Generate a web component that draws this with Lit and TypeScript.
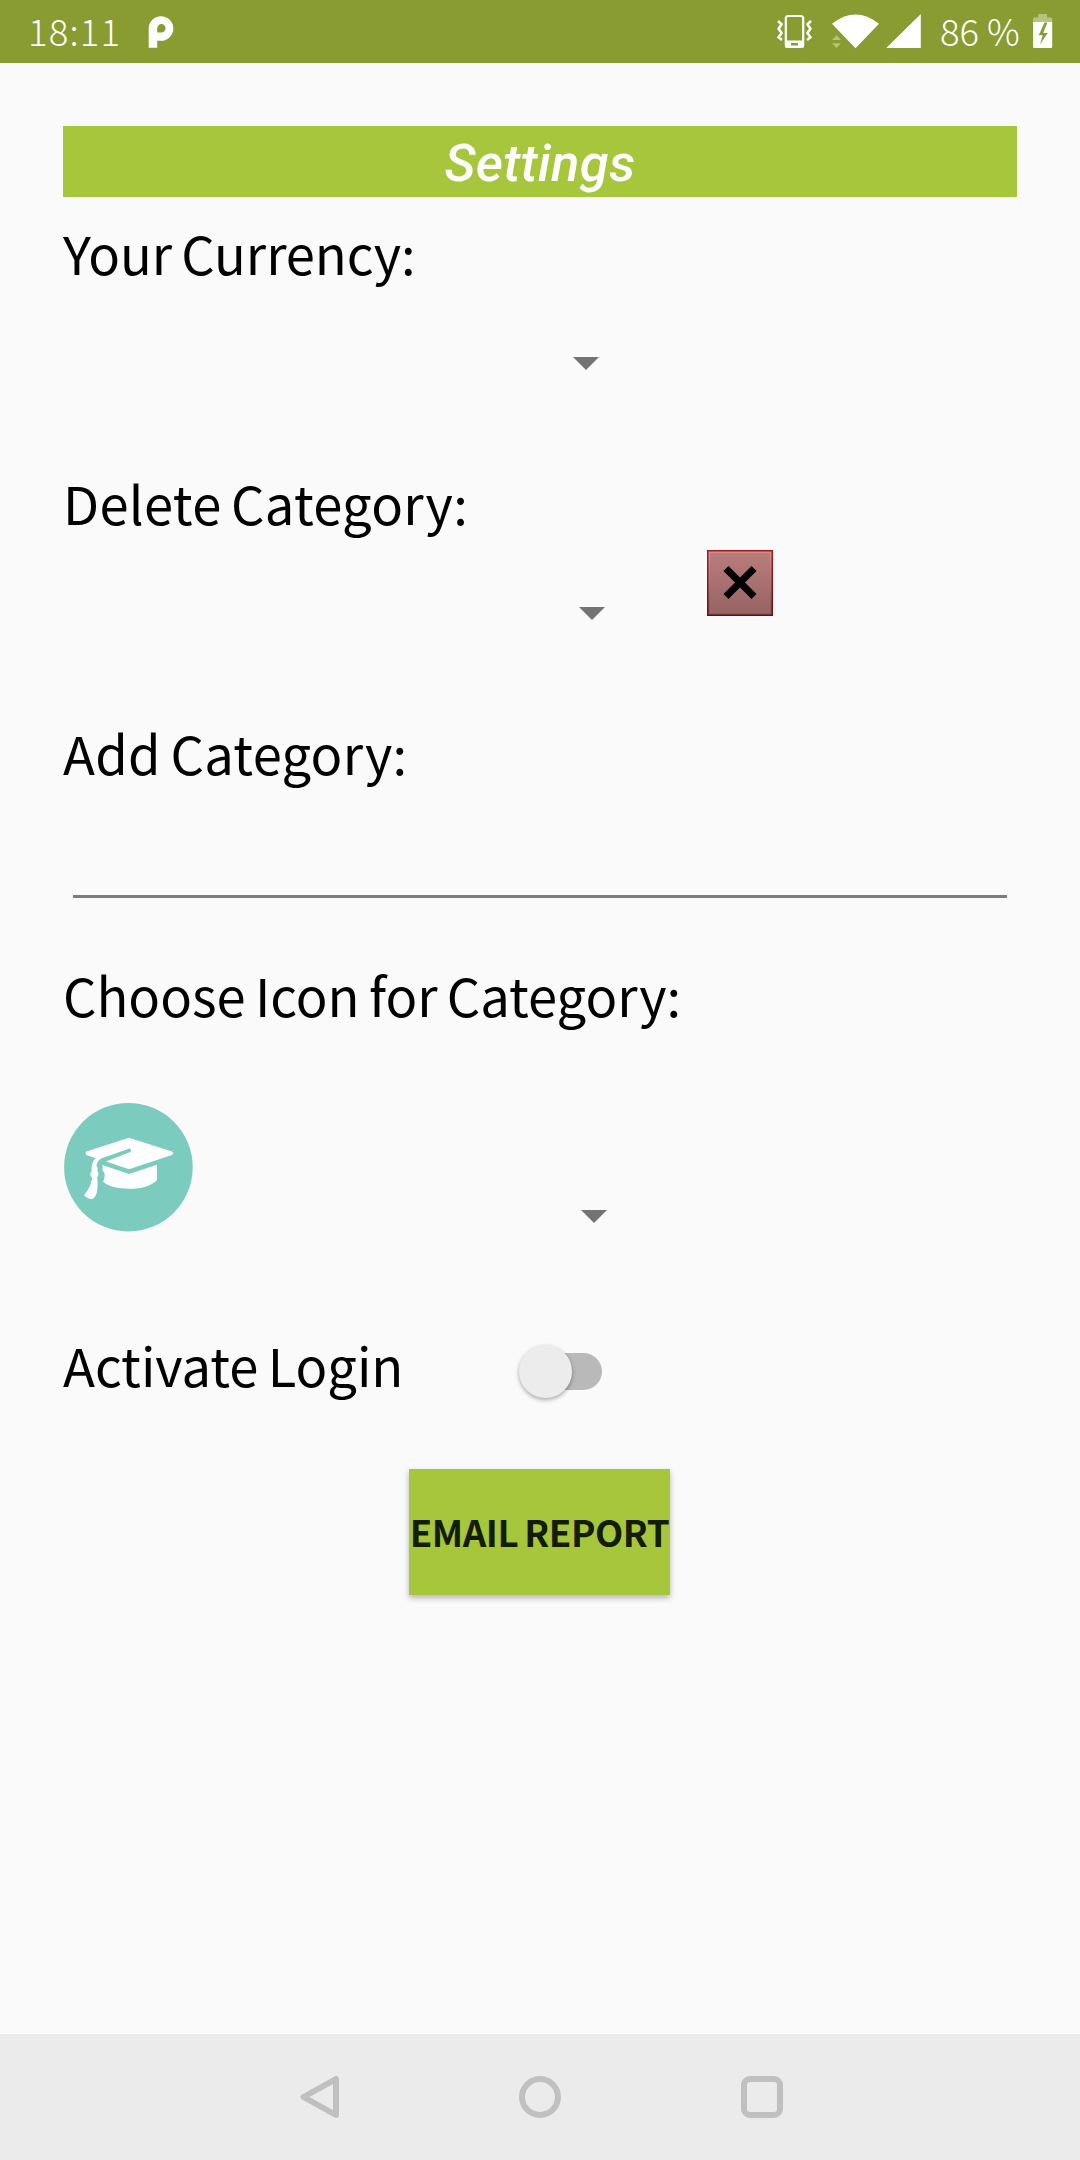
import { LitElement, html, css } from "lit";
import { customElement, state } from "lit/decorators.js";

@customElement("status-bar")
class StatusBar extends LitElement {
  static styles = css`
    :host { display: flex; height: 63px; background: #889c32; color: #fff; align-items: flex-start; box-sizing: border-box; padding-left: 28px; }
    .text { font: 300 36.5px/54px "Noto Sans CJK SC", "Noto Sans", sans-serif; padding-top: 4px; white-space: pre; }
    .time { width: 120px; letter-spacing: 1.2px; }
    .battery-text { width: 93px; }
    svg { display: block; height: 63px; flex: none; }
    .gap { flex: 1; }
  `;
  render() {
    return html`
      <span class="text time">18:11</span>
      <svg width="30" viewBox="148 0 30 63"><path fill="#fff" fill-rule="evenodd" d="M148.7 47.7V28.5a12.3 12.3 0 1 1 12.3 12.3h-3.8v6.9zM157.2 32.5h3.8a4.2 4.2 0 1 0-3.8-4z"/></svg>
      <span class="gap"></span>
      <svg width="164" viewBox="776 0 164 63">
        <g fill="none" stroke="#fff" stroke-width="2.2">
          <rect x="785.8" y="16" width="17.4" height="31" rx="2.5"/>
          <path d="M778 21l3.6 3.3-3 4.5 3 4.3-3 4.2 3.4 2.7M811 21l-3.6 3.3 3 4.5-3 4.3 3 4.2-3.4 2.7" stroke-width="2.5"/>
        </g>
        <path fill="#fff" fill-rule="evenodd" d="M785 40.5h19v7h-19zM791 43v2.4h7V43z"/>
        <path fill="#fff" d="M832 23.8Q855.5 5 879 23.8L855.5 48.3zM886.3 48L920.8 14v34z" stroke-linejoin="round"/>
        <path fill="#b5c37f" d="M832 40l4.5-4.8L841 40zM832 43.2h9l-4.5 4.8z"/>
      </svg>
      <span class="text battery-text">86 %</span>
      <svg width="47" viewBox="1033 0 47 63">
        <path fill="#b5c37f" d="M1033 22v-3q0-1.5 1.5-1.5h3.7V14h8.8v3.5h3.7q1.5 0 1.5 1.5v3z"/>
        <path fill="#fff" d="M1033 22h19.2v24.5q0 1.5-1.5 1.5h-16.2q-1.5 0-1.5-1.5z"/>
        <path fill="#889c32" d="M1044.5 22.5l-5.8 12.8h4L1040 44.5l7.7-11.5h-4.4l4-10.5z"/>
      </svg>`;
  }
}

@customElement("spinner-caret")
class SpinnerCaret extends LitElement {
  static styles = css`
    :host { display: block; width: 26px; height: 13px; }
    svg { display: block; }
  `;
  render() {
    return html`<svg width="26" height="13" viewBox="0 0 26 13"><path fill="#737373" d="M0 0h26L13 13z"/></svg>`;
  }
}

@customElement("nav-bar")
class NavBar extends LitElement {
  static styles = css`
    :host { display: flex; height: 126px; background: #ebebeb; align-items: center; justify-content: center; gap: 178px; }
    svg { display: block; width: 44px; height: 44px; }
  `;
  render() {
    return html`
      <svg viewBox="0 0 44 44" fill="none" stroke="#c0c0c0" stroke-width="6" stroke-linejoin="round"><path d="M7.5 22L40 4v36z" /></svg>
      <svg viewBox="0 0 44 44" fill="none" stroke="#c0c0c0" stroke-width="6"><circle cx="22" cy="22" r="18"/></svg>
      <svg viewBox="0 0 44 44" fill="none" stroke="#c0c0c0" stroke-width="6"><rect x="4" y="4" width="36" height="36" rx="6"/></svg>`;
  }
}

@customElement("app-root")
class AppRoot extends LitElement {
  static styles = css`
    :host { display: flex; flex-direction: column; height: 2160px; background: #fafafa; color: #000; font-family: "Noto Sans CJK SC", "Noto Sans", sans-serif; }
    main { flex: 1; display: flex; flex-direction: column; padding: 63px 63px 0; }
    .title { height: 71px; margin: 0; background: #a6c63c; color: #fff; font: italic 500 52.5px/75px Roboto, sans-serif; letter-spacing: 0.3px; text-align: center; }
    .section { display: flex; flex-direction: column; }
    .currency { height: 250px; }
    .delete { height: 250px; }
    .add { height: 242px; }
    .icon { height: 391px; }
    .label { font-size: 52.5px; line-height: 67px; padding-top: 22px; height: 71px; white-space: pre; word-spacing: -2.5px; }
    .snug { letter-spacing: -0.1px; }
    .airy { letter-spacing: 0.3px; }
    .row { display: flex; align-items: flex-start; }
    .currency .row { padding: 67px 0 0 509.5px; }
    .delete .row { padding: 10px 0 0 515.5px; }
    .delete spinner-caret { margin-top: 57px; }
    .remove { margin: 0 0 0 102.5px; width: 66px; height: 66px; padding: 0; border: 0; background: none; }
    .remove svg { display: block; }
    .field { margin: 105px 10px 0; height: 3px; background: #7b7b7b; }
    .icon .row { padding-top: 70px; }
    .icon spinner-caret { margin: 108px 0 0 387.5px; }
    .login { display: flex; height: 139px; align-items: flex-start; }
    .login .label { padding-top: 1px; width: 456px; }
    .switch { display: flex; align-items: center; width: 83px; height: 53px; margin-top: 15px; border: 0; padding: 0; background: none; }
    .thumb { width: 53px; height: 53px; border-radius: 50%; background: #ececec; box-shadow: 0 2px 4px rgba(0,0,0,.32); z-index: 1; }
    .track { width: 57px; height: 37px; margin-left: -27px; border-radius: 19px; background: #b9b9b9; }
    .report { align-self: flex-start; margin: 0 0 0 346px; width: 261px; height: 126px; border: 0; padding: 0; background: #a6c63c; color: #151c05; font: 700 36.75px/124px "Noto Sans CJK SC", "Noto Sans", sans-serif; letter-spacing: -0.45px; word-spacing: -2px; white-space: nowrap; box-shadow: 0 3px 6px rgba(0,0,0,.28); display: flex; justify-content: center; align-items: flex-start; }
  `;

  @state() private loginActive = false;

  render() {
    return html`
      <status-bar></status-bar>
      <main>
        <h1 class="title">Settings</h1>
        <section class="section currency">
          <span class="label snug">Your Currency:</span>
          <div class="row"><spinner-caret></spinner-caret></div>
        </section>
        <section class="section delete">
          <span class="label airy">Delete Category:</span>
          <div class="row">
            <spinner-caret></spinner-caret>
            <button class="remove" aria-label="Delete">
              <svg width="66" height="66" viewBox="0 0 66 66">
                <defs>
                  <linearGradient id="face" x1="0" y1="0" x2="0" y2="1"><stop offset="0" stop-color="#b97c7c"/><stop offset="1" stop-color="#986464"/></linearGradient>
                  <linearGradient id="edge" x1="0" y1="0" x2="0" y2="1"><stop offset="0" stop-color="#a01c1c"/><stop offset="1" stop-color="#641010"/></linearGradient>
                  <linearGradient id="shine" x1="0" y1="0" x2="0" y2="1"><stop offset="0" stop-color="#d09090"/><stop offset="1" stop-color="#8d5656"/></linearGradient>
                </defs>
                <rect width="66" height="66" fill="url(#edge)"/>
                <rect x="1.5" y="1.5" width="63" height="63" fill="url(#shine)"/>
                <rect x="3" y="3" width="60" height="60" fill="url(#face)"/>
                <path d="M19 18.5L47 46.5M47 18.5L19 46.5" stroke="#000" stroke-width="7"/>
              </svg>
            </button>
          </div>
        </section>
        <section class="section add">
          <span class="label airy">Add Category:</span>
          <div class="field"></div>
        </section>
        <section class="section icon">
          <span class="label">Choose Icon for Category:</span>
          <div class="row">
            <svg width="130" height="130" viewBox="63 1102 130 130">
              <circle cx="128.4" cy="1167.2" r="64.3" fill="#7bcbbe"/>
              <g fill="#fff">
                <path d="M129 1137.7L172 1151.5Q174.5 1153 172 1155L129 1169.3L106 1161.5L130.5 1152Q132 1149.5 129.5 1148.6L101 1158.5Q97.5 1160.5 96.5 1165Q98 1169 97.5 1171Q99.5 1174 97.3 1177Q98.5 1190 95.5 1196Q94 1199 91.5 1199.3Q87 1198.5 84 1195.2Q90.5 1188 92.2 1178Q88.8 1175 91.5 1171Q91.2 1162 95.5 1158.2L86.5 1155Q84.5 1153 86.5 1151.5z"/>
                <path d="M102.5 1165L129 1174L157 1164.8V1180C151 1186.5 140 1189 129 1188.8C118 1188.5 108 1186.5 103 1181.5Q105.3 1178 104.5 1173Q102.3 1171 102.5 1169z"/>
              </g>
            </svg>
            <spinner-caret></spinner-caret>
          </div>
        </section>
        <div class="login">
          <span class="label">Activate Login</span>
          <button class="switch" role="switch" aria-checked=${this.loginActive} aria-label="Activate Login">
            <span class="thumb"></span><span class="track"></span>
          </button>
        </div>
        <button class="report">EMAIL REPORT</button>
      </main>
      <nav-bar></nav-bar>`;
  }
}
